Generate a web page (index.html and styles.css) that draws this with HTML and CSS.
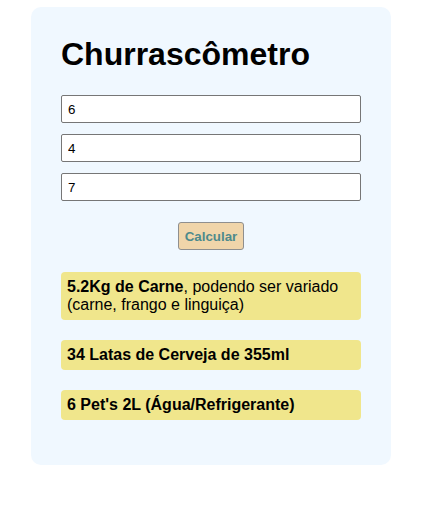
FILE: index.html
```html
<!DOCTYPE html>
<html lang="pt-BR">
<head>
<meta charset="UTF-8">
<title>Churrascômetro</title>
<link rel="stylesheet" href="styles.css">
</head>
<body>
<main class="card">
  <h1 class="title">Churrascômetro</h1>
  <div class="fields">
    <input class="field" type="number" value="6">
    <input class="field" type="number" value="4">
    <input class="field" type="number" value="7">
  </div>
  <div class="actions">
    <button class="btn" type="button">Calcular</button>
  </div>
  <div class="results">
    <p class="result"><strong>5.2Kg de Carne</strong>, podendo ser variado (carne, frango e linguiça)</p>
    <p class="result"><strong>34 Latas de Cerveja de 355ml</strong></p>
    <p class="result"><strong>6 Pet's 2L (Água/Refrigerante)</strong></p>
  </div>
</main>
</body>
</html>
```

FILE: styles.css
```css
html, body {
  margin: 0;
  padding: 0;
  background: #ffffff;
}
body {
  font-family: "Liberation Sans", Arial, sans-serif;
  color: #000;
}
.card {
  box-sizing: border-box;
  width: 360px;
  margin: 7px 0 0 31px;
  padding: 29px 30px 45px;
  background: #f0f8ff;
  border-radius: 10px;
}
.title {
  margin: 0 0 22px;
  font-size: 32px;
  font-weight: bold;
  line-height: 37px;
}
.fields {
  display: flex;
  flex-direction: column;
  gap: 11px;
}
.field {
  box-sizing: border-box;
  width: 300px;
  height: 28px;
  margin: 0;
  padding: 4px 6px;
  border: 1px solid #767676;
  border-radius: 2px;
  background: #fff;
  font-family: "Liberation Sans", Arial, sans-serif;
  font-size: 13.33px;
  color: #000;
  -moz-appearance: textfield;
}
.field::-webkit-outer-spin-button,
.field::-webkit-inner-spin-button {
  -webkit-appearance: none;
  margin: 0;
}
.actions {
  display: flex;
  justify-content: center;
  margin-top: 21px;
}
.btn {
  box-sizing: border-box;
  width: 66px;
  height: 28px;
  padding: 0;
  border: 1px solid #8f8f8f;
  border-radius: 3px;
  background: #f0d5aa;
  color: #4e8a8c;
  font-family: "Liberation Sans", Arial, sans-serif;
  font-size: 13.33px;
  font-weight: bold;
}
.results {
  display: flex;
  flex-direction: column;
  gap: 20px;
  margin-top: 22px;
}
.result {
  margin: 0;
  padding: 6px 6px;
  background: #f0e68c;
  border-radius: 4px;
  font-size: 16px;
  line-height: 18px;
}
```
